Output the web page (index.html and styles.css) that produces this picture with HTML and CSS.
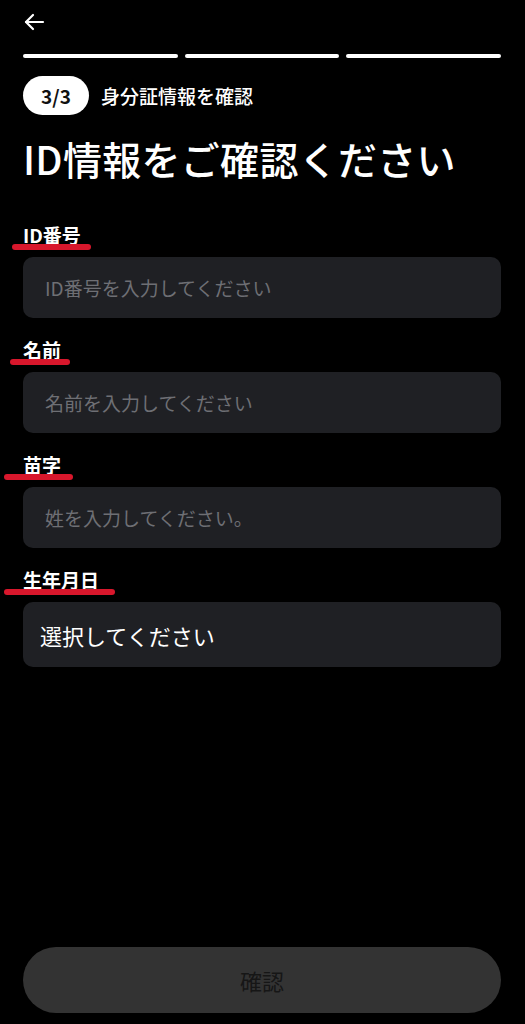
FILE: index.html
```html
<!DOCTYPE html>
<html lang="ja">
<head>
<meta charset="utf-8">
<title>ID情報をご確認ください</title>
<link rel="stylesheet" href="styles.css">
</head>
<body>
<div class="page">
  <div class="header">
    <svg class="back" width="22" height="22" viewBox="0 0 22 22" fill="none" stroke="#fff" stroke-width="2.2" stroke-linecap="round" stroke-linejoin="round">
      <path d="M20 11H3"/>
      <path d="M10 4L3 11L10 18"/>
    </svg>
  </div>
  <div class="progress">
    <span class="bar"></span><span class="bar"></span><span class="bar"></span>
  </div>
  <div class="step">
    <span class="badge">3/3</span>
    <span class="step-text">身分証情報を確認</span>
  </div>
  <h1 class="title">ID情報をご確認ください</h1>

  <div class="field field-first">
    <div class="label"><span class="mark mark-1"></span>ID番号</div>
    <div class="input placeholder">ID番号を入力してください</div>
  </div>
  <div class="field">
    <div class="label"><span class="mark mark-2"></span>名前</div>
    <div class="input placeholder">名前を入力してください</div>
  </div>
  <div class="field">
    <div class="label"><span class="mark mark-3"></span>苗字</div>
    <div class="input placeholder">姓を入力してください。</div>
  </div>
  <div class="field">
    <div class="label"><span class="mark mark-4"></span>生年月日</div>
    <div class="input select">選択してください</div>
  </div>

  <div class="spacer"></div>
  <div class="button">確認</div>
</div>
</body>
</html>
```

FILE: styles.css
```css
html, body {
  margin: 0;
  padding: 0;
  background: #000;
}
body {
  font-family: "Noto Sans CJK JP", "Noto Sans", sans-serif;
  color: #fff;
}
.page {
  box-sizing: border-box;
  width: 525px;
  height: 1024px;
  padding: 0 24px 11px 23px;
  display: flex;
  flex-direction: column;
}
.header {
  height: 44px;
  display: flex;
  align-items: center;
}
.back {
  display: block;
  margin-top: -1px;
}
.progress {
  margin-top: 10px;
  display: flex;
  gap: 7px;
}
.bar {
  flex: 1;
  height: 4px;
  border-radius: 2px;
  background: #fff;
}
.step {
  margin-top: 18px;
  display: flex;
  align-items: center;
  gap: 12px;
}
.badge {
  height: 39px;
  width: 66px;
  border-radius: 20px;
  background: #fff;
  color: #111;
  font-weight: 700;
  font-size: 19px;
  display: flex;
  align-items: center;
  justify-content: center;
}
.step-text {
  font-size: 19px;
  font-weight: 500;
}
.title {
  margin: 18px 0 0;
  font-size: 39px;
  line-height: 50px;
  font-weight: 500;
  letter-spacing: 0.3px;
}
.field {
  margin-top: 20px;
}
.field-first {
  margin-top: 40px;
}
.label {
  position: relative;
  display: inline-block;
  vertical-align: top;
  font-size: 19px;
  line-height: 24px;
  font-weight: 700;
}
.mark {
  position: absolute;
  height: 6px;
  bottom: -3px;
  border-radius: 3px;
  background: #d8172c;
}
.mark-1 { left: -11px; right: -10px; }
.mark-2 { left: -13px; right: -9px; }
.mark-3 { left: -19px; right: -12px; }
.mark-4 { left: -19px; right: -16px; }
.input {
  margin-top: 10px;
  height: 61px;
  border-radius: 10px;
  background: #1f2024;
  display: flex;
  align-items: center;
  padding-left: 22px;
  font-size: 19px;
}
.placeholder {
  color: #6e6f74;
}
.select {
  height: 65px;
  padding-left: 17px;
  font-size: 22px;
  color: #fff;
}
.spacer {
  flex: 1;
}
.button {
  height: 66px;
  border-radius: 33px;
  background: #333333;
  color: #161616;
  font-size: 22px;
  display: flex;
  align-items: center;
  justify-content: center;
}
```
